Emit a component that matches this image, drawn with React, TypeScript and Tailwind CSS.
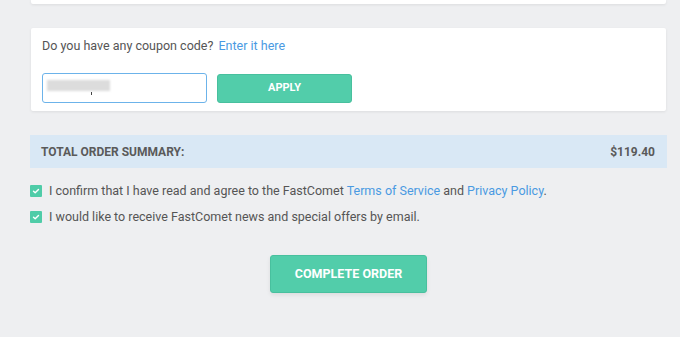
import React from 'react';

function CheckBox() {
  return (
    <span className="flex h-[12px] w-[12px] shrink-0 items-center justify-center rounded-[1px] bg-[#4fcca8]">
      <svg width="8" height="8" viewBox="0 0 8 8" fill="none">
        <path d="M1.5 4.2 L3.2 5.8 L6.5 2.4" stroke="white" strokeWidth="1.4" strokeLinecap="round" strokeLinejoin="round" />
      </svg>
    </span>
  );
}

export default function App() {
  return (
    <div className="h-[337px] w-[680px] overflow-hidden bg-[#eeeff1] font-['Roboto',sans-serif] text-[#555]">
      <div className="ml-[31px] mr-[14px]">
        {/* previous card edge */}
        <div className="h-[4px] rounded-b-[2px] bg-white shadow-[0_1px_3px_rgba(0,0,0,0.08)]" />

        {/* Coupon */}
        <div className="mt-[24px] h-[83px] rounded-[2px] bg-white px-[11px] pt-[10px] shadow-[0_1px_3px_rgba(0,0,0,0.08)]">
          <p className="text-[12.5px] leading-[16px]">
            Do you have any coupon code? <a className="ml-[2px] text-[#4a9ae2]">Enter it here</a>
          </p>
          <div className="mt-[19px] flex items-center gap-[10px]">
            <div className="relative h-[30px] w-[165px] rounded-[3px] border border-[#6cb3ea] bg-white">
              <div className="absolute left-[4px] top-[6px] h-[11px] w-[63px] bg-[#dcdcdc] blur-[1px]" />
              <div className="absolute left-[48px] top-[18px] h-[3px] w-px bg-[#444]" />
            </div>
            <button className="h-[29px] w-[135px] rounded-[3px] border border-[#48c09e] bg-[#52cdaa] text-[11px] font-bold text-white">
              APPLY
            </button>
          </div>
        </div>
      </div>

      {/* Summary */}
      <div className="ml-[30px] mr-[13px] mt-[24px] flex h-[33px] items-center justify-between bg-[#d9e8f5] pl-[11px] pr-[12px] text-[12px] font-bold text-[#5a5a5a]">
        <span>TOTAL ORDER SUMMARY:</span>
        <span>$119.40</span>
      </div>

      <div className="ml-[30px] mt-[14px] flex flex-col gap-[9px] text-[12.5px] leading-[17px]">
        <label className="flex items-center gap-[7px]">
          <CheckBox />
          <span>
            I confirm that I have read and agree to the FastComet{' '}
            <a className="text-[#4a9ae2]">Terms of Service</a> and{' '}
            <a className="text-[#4a9ae2]">Privacy Policy</a>.
          </span>
        </label>
        <label className="flex items-center gap-[7px]">
          <CheckBox />
          <span>I would like to receive FastComet news and special offers by email.</span>
        </label>
      </div>

      <div className="mt-[30px] flex justify-center pl-[17px]">
        <button className="h-[38px] w-[157px] rounded-[3px] border border-[#48c09e] bg-[#52cdaa] text-[12.5px] font-bold text-white shadow-[0_2px_4px_rgba(0,0,0,0.08)]">
          COMPLETE ORDER
        </button>
      </div>
    </div>
  );
}
